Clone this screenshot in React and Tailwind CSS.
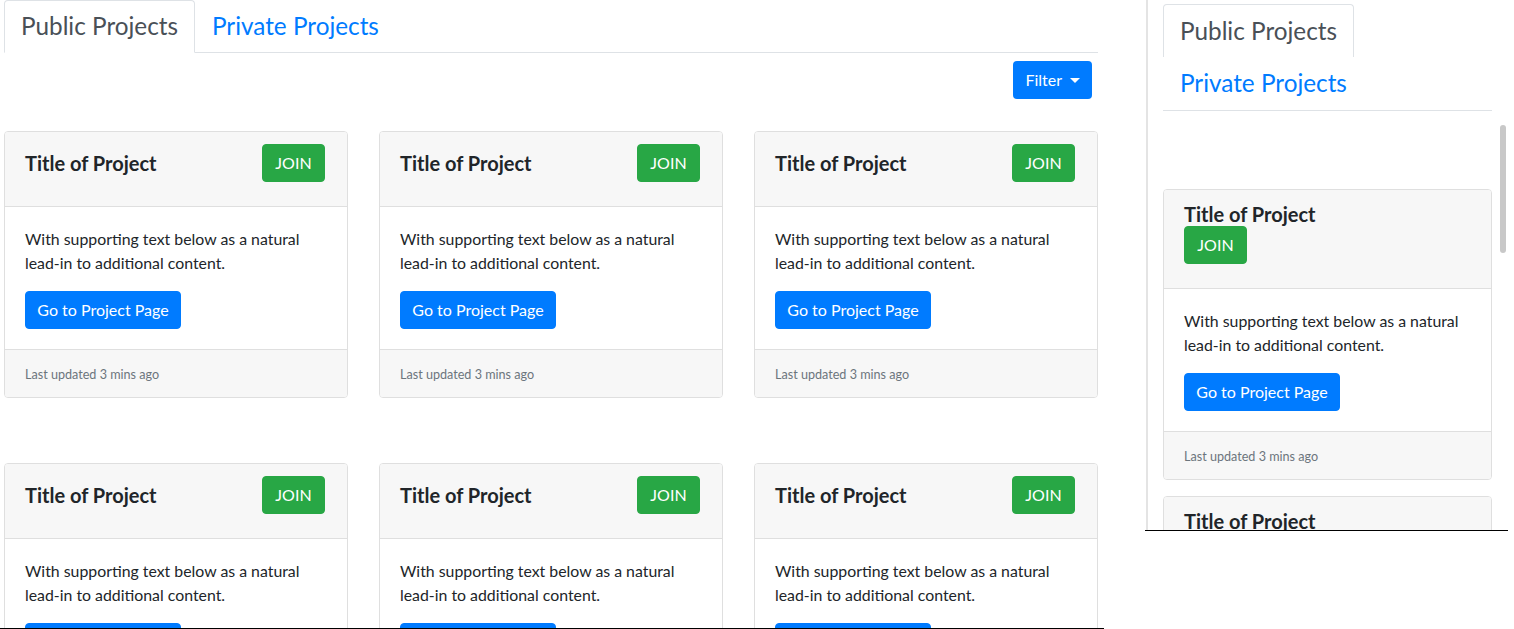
import React from 'react'

const TEXT = 'With supporting text below as a natural lead-in to additional content.'

/* ── one project card ─────────────────────────────── */
function ProjectCard({ stacked }) {
  return (
    <div className="border border-[#dfdfdf] rounded bg-white overflow-hidden">
      <div
        className={
          stacked
            ? 'bg-[#f7f7f7] border-b border-[#dfdfdf] px-5 pt-3 pb-[24px]'
            : 'bg-[#f7f7f7] border-b border-[#dfdfdf] px-5 pt-3 pb-[24px] flex items-center justify-between'
        }
      >
        <h5 className="text-[20px] leading-6 font-bold text-[#212529]">Title of Project</h5>
        <button
          className={
            stacked
              ? 'h-[38px] w-[63px] rounded bg-[#28a745] border border-[#28a745] text-white text-base leading-6'
              : 'h-[38px] w-[63px] mr-[2px] rounded bg-[#28a745] border border-[#28a745] text-white text-base leading-6'
          }
        >
          JOIN
        </button>
      </div>
      <div className="p-5">
        <p className="text-[15.85px] leading-6 text-[#212529] mb-4">{TEXT}</p>
        <button className="h-[38px] w-[156px] rounded bg-[#007bff] border border-[#007bff] text-white text-base leading-6">
          Go to Project Page
        </button>
      </div>
      <div className="bg-[#f7f7f7] border-t border-[#dfdfdf] px-5 pt-[13px] pb-[10px]">
        <p className="text-[12.6px] leading-6 text-[#6c757d]">Last updated 3 mins ago</p>
      </div>
    </div>
  )
}

export default function App() {
  return (
    <div className="w-[1514px] h-[629px] bg-white flex items-start overflow-hidden font-['Lato',sans-serif]">
      {/* Desktop view */}
      <div className="w-[1104px] h-[629px] border-b border-black overflow-hidden pl-1 pr-[6px] shrink-0">
        <ul className="flex border-b border-[#dee2e6]">
          <li className="h-[53px] -mb-px px-4 flex items-center border border-[#dee2e6] border-b-white rounded-t bg-white text-[24.3px] text-[#495057]">
            Public Projects
          </li>
          <li className="h-[53px] -mb-px px-4 flex items-center border border-transparent text-[24.3px] text-[#007bff]">
            Private Projects
          </li>
        </ul>

        <div className="flex justify-end mt-2 pr-[6px]">
          <button className="h-[38px] px-3 rounded bg-[#007bff] text-white text-base leading-6 flex items-center">
            Filter
            <span className="ml-2 w-0 h-0 border-t-[5px] border-t-white border-x-[5px] border-x-transparent" />
          </button>
        </div>

        <div className="grid grid-cols-3 gap-x-[31px] gap-y-[65px] mt-8">
          {[0, 1, 2, 3, 4, 5].map(i => (
            <ProjectCard key={i} />
          ))}
        </div>
      </div>

      {/* Mobile view */}
      <div className="relative ml-[41px] w-[363px] h-[531px] border-b border-black overflow-hidden shrink-0">
        <div className="ml-px h-full border-l-2 border-[#e4e4e4] pl-[15px] pt-1">
          <div className="w-[329px]">
            <ul className="flex flex-col items-start border-b border-[#dee2e6]">
              <li className="h-[53px] px-4 flex items-center whitespace-nowrap border border-b-0 border-[#dee2e6] rounded-t text-[24.3px] text-[#495057]">
                Public Projects
              </li>
              <li className="h-[53px] px-[17px] flex items-center whitespace-nowrap text-[24.3px] text-[#007bff]">
                Private Projects
              </li>
            </ul>

            <div className="mt-[78px] flex flex-col gap-4">
              <ProjectCard stacked />
              <ProjectCard stacked />
            </div>
          </div>
        </div>
        {/* scrollbar thumb */}
        <div className="absolute right-[2px] top-[125px] w-[6px] h-[128px] rounded-full bg-[#c8c8c8]" />
      </div>
    </div>
  )
}
